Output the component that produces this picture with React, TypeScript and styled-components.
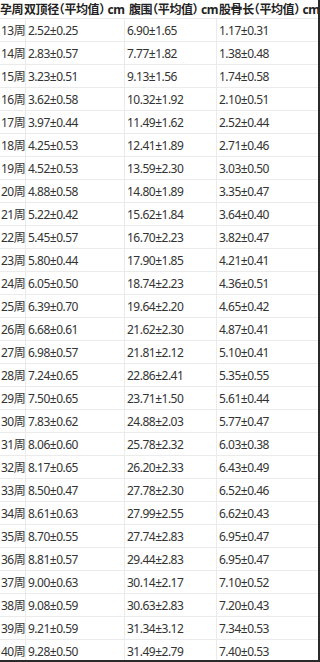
import React from "react";
import styled, { createGlobalStyle } from "styled-components";

const Global = createGlobalStyle`
  html, body { margin: 0; padding: 0; background: #fff; }
  body { font-family: "Noto Sans", "Noto Sans CJK SC", sans-serif; }
`;

const Frame = styled.div`
  width: 320px;
  height: 662px;
  box-sizing: border-box;
  border-right: 2px solid #2a2a2a;
  border-bottom: 2px solid #2a2a2a;
  overflow: hidden;
  background: #fff;
`;

const Row = styled.div<{ $head?: boolean }>`
  display: grid;
  grid-template-columns: ${(p) => (p.$head ? "24px 105px 90px 1fr" : "26px 99px 92px 1fr")};
  height: ${(p) => (p.$head ? 19 : 23)}px;
  box-sizing: border-box;
  border-bottom: 1px solid #ebebeb;
`;

const Cell = styled.div<{ $first?: boolean; $last?: boolean }>`
  display: flex;
  align-items: center;
  padding-left: ${(p) => (p.$first ? 1 : 2)}px;
  border-right: ${(p) => (p.$last ? "none" : "1px solid #ebebeb")};
  font-size: 12px;
  letter-spacing: -0.5px;
  color: #333;
  white-space: nowrap;
  min-width: 0;
`;

const HeadCell = styled.div`
  display: flex;
  align-items: center;
  font-size: 12px;
  font-weight: 700;
  letter-spacing: -0.4px;
  font-feature-settings: "halt";
  color: #222;
  white-space: nowrap;
  min-width: 0;
`;

const data: [string, string, string, string][] = [
  ["13周", "2.52±0.25", "6.90±1.65", "1.17±0.31"],
  ["14周", "2.83±0.57", "7.77±1.82", "1.38±0.48"],
  ["15周", "3.23±0.51", "9.13±1.56", "1.74±0.58"],
  ["16周", "3.62±0.58", "10.32±1.92", "2.10±0.51"],
  ["17周", "3.97±0.44", "11.49±1.62", "2.52±0.44"],
  ["18周", "4.25±0.53", "12.41±1.89", "2.71±0.46"],
  ["19周", "4.52±0.53", "13.59±2.30", "3.03±0.50"],
  ["20周", "4.88±0.58", "14.80±1.89", "3.35±0.47"],
  ["21周", "5.22±0.42", "15.62±1.84", "3.64±0.40"],
  ["22周", "5.45±0.57", "16.70±2.23", "3.82±0.47"],
  ["23周", "5.80±0.44", "17.90±1.85", "4.21±0.41"],
  ["24周", "6.05±0.50", "18.74±2.23", "4.36±0.51"],
  ["25周", "6.39±0.70", "19.64±2.20", "4.65±0.42"],
  ["26周", "6.68±0.61", "21.62±2.30", "4.87±0.41"],
  ["27周", "6.98±0.57", "21.81±2.12", "5.10±0.41"],
  ["28周", "7.24±0.65", "22.86±2.41", "5.35±0.55"],
  ["29周", "7.50±0.65", "23.71±1.50", "5.61±0.44"],
  ["30周", "7.83±0.62", "24.88±2.03", "5.77±0.47"],
  ["31周", "8.06±0.60", "25.78±2.32", "6.03±0.38"],
  ["32周", "8.17±0.65", "26.20±2.33", "6.43±0.49"],
  ["33周", "8.50±0.47", "27.78±2.30", "6.52±0.46"],
  ["34周", "8.61±0.63", "27.99±2.55", "6.62±0.43"],
  ["35周", "8.70±0.55", "27.74±2.83", "6.95±0.47"],
  ["36周", "8.81±0.57", "29.44±2.83", "6.95±0.47"],
  ["37周", "9.00±0.63", "30.14±2.17", "7.10±0.52"],
  ["38周", "9.08±0.59", "30.63±2.83", "7.20±0.43"],
  ["39周", "9.21±0.59", "31.34±3.12", "7.34±0.53"],
  ["40周", "9.28±0.50", "31.49±2.79", "7.40±0.53"],
];

const headers = ["孕周", "双顶径（平均值） cm", "腹围（平均值） cm", "股骨长（平均值） cm"];

export default function App() {
  return (
    <>
      <Global />
      <Frame>
        <Row $head>
          {headers.map((h) => (
            <HeadCell key={h}>{h}</HeadCell>
          ))}
        </Row>
        {data.map((r) => (
          <Row key={r[0]}>
            {r.map((v, i) => (
              <Cell key={i} $first={i === 0} $last={i === 3}>
                {v}
              </Cell>
            ))}
          </Row>
        ))}
      </Frame>
    </>
  );
}
